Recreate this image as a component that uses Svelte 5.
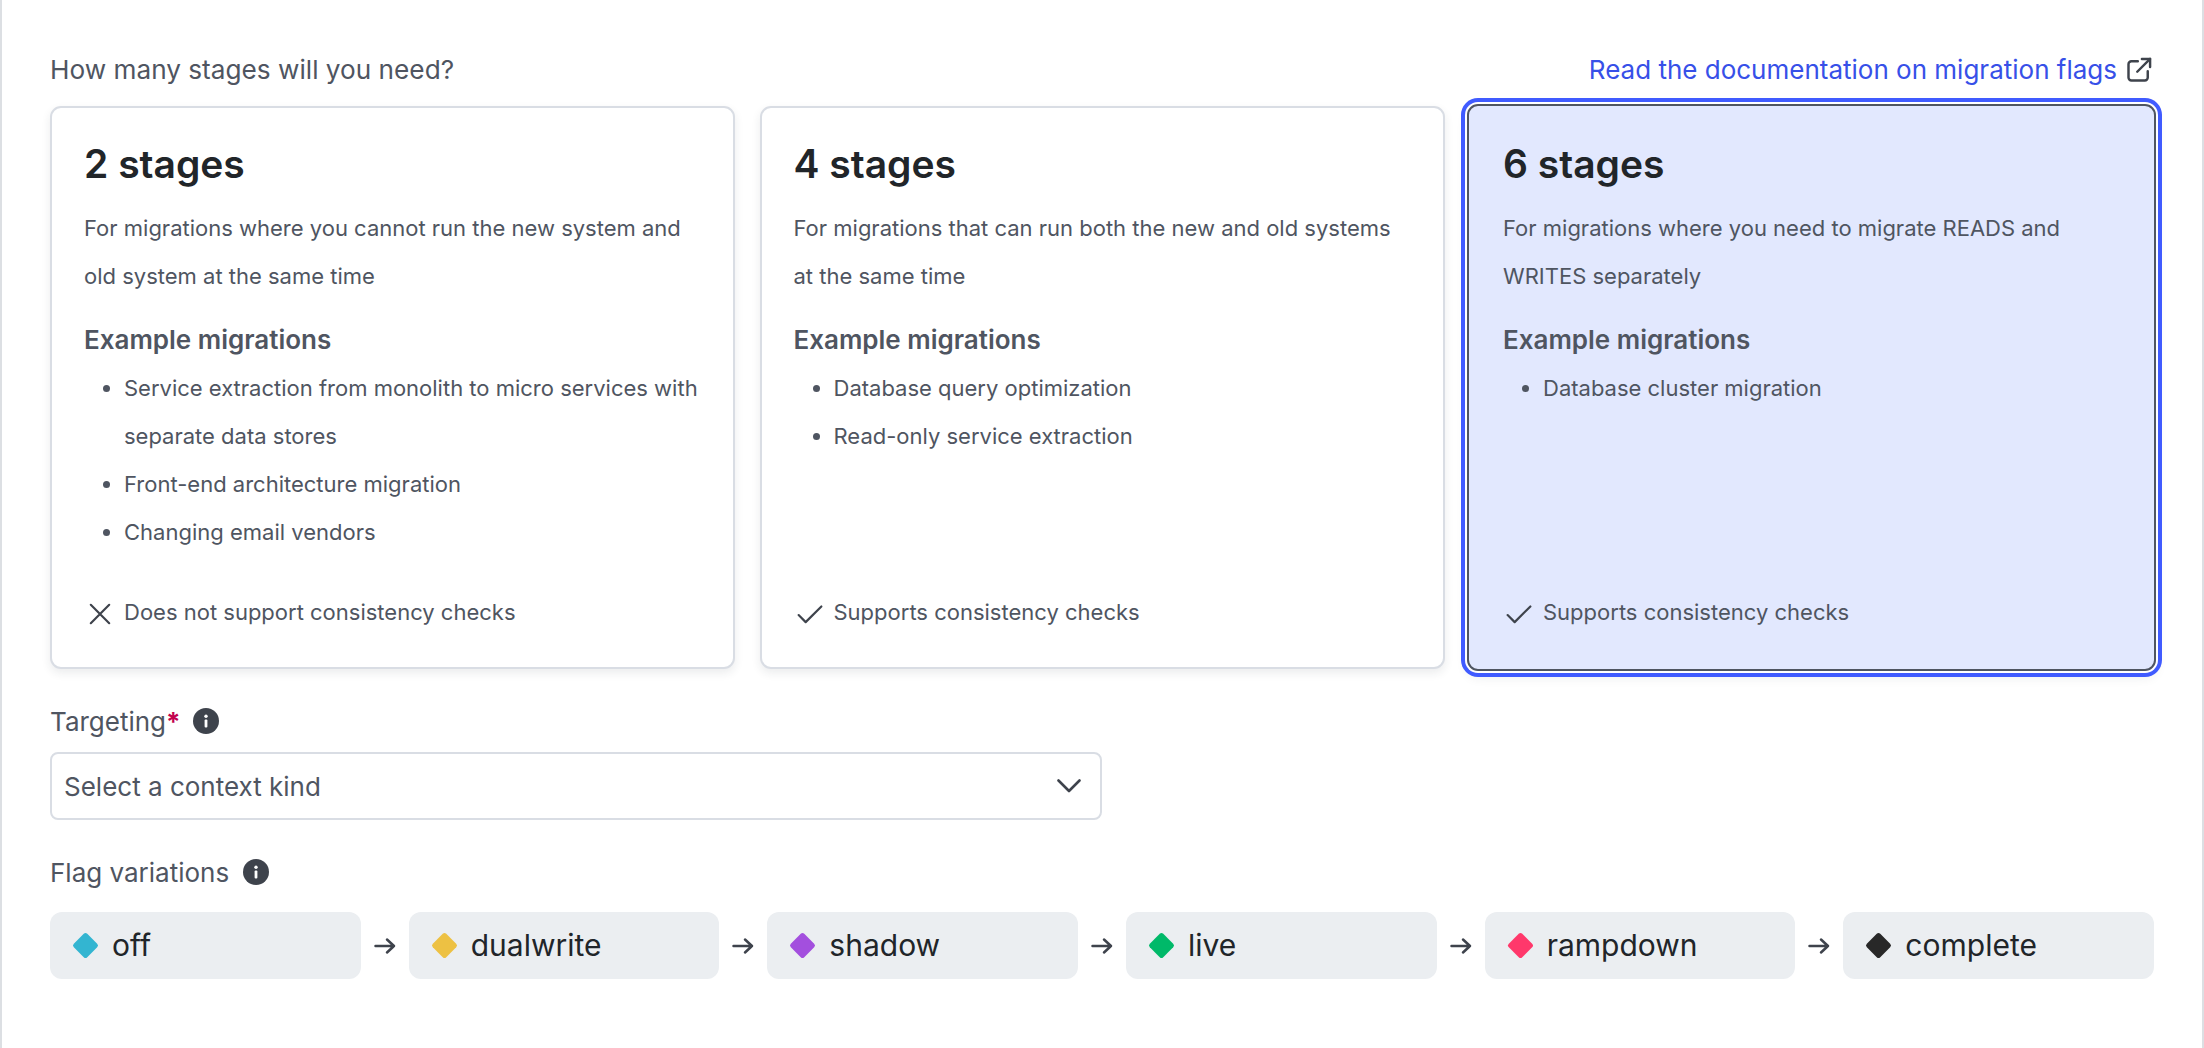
<script>
  const cards = [
    { title: '2 stages', desc: 'For migrations where you cannot run the new system and old system at the same time', items: ['Service extraction from monolith to micro services with separate data stores', 'Front-end architecture migration', 'Changing email vendors'], ok: false, foot: 'Does not support consistency checks' },
    { title: '4 stages', desc: 'For migrations that can run both the new and old systems at the same time', items: ['Database query optimization', 'Read-only service extraction'], ok: true, foot: 'Supports consistency checks' },
    { title: '6 stages', desc: 'For migrations where you need to migrate READS and WRITES separately', items: ['Database cluster migration'], ok: true, foot: 'Supports consistency checks', selected: true }
  ];
  const flags = [
    { name: 'off', color: '#33b5d1' },
    { name: 'dualwrite', color: '#edc143' },
    { name: 'shadow', color: '#a34fde' },
    { name: 'live', color: '#00b969' },
    { name: 'rampdown', color: '#ff386b' },
    { name: 'complete', color: '#282828' }
  ];
</script>

{#snippet info()}
  <svg class="info" viewBox="0 0 26 26" aria-hidden="true">
    <circle cx="13" cy="13" r="13" fill="#3e434c" />
    <circle cx="13" cy="8.2" r="1.7" fill="#fff" />
    <rect x="11.6" y="11.4" width="2.8" height="8" rx="1" fill="#fff" />
  </svg>
{/snippet}

<main class="page">
  <header class="top">
    <span class="label">How many stages will you need?</span>
    <a class="doc" href="#doc">
      Read the documentation on migration flags
      <svg class="ext" viewBox="0 0 24 24" fill="none" stroke="#3e434c" stroke-width="2.1" stroke-linecap="round" stroke-linejoin="round" aria-hidden="true">
        <path d="M11 4.5H5.5a2.5 2.5 0 0 0-2.5 2.5v11.5a2.5 2.5 0 0 0 2.5 2.5H17a2.5 2.5 0 0 0 2.5-2.5V13" />
        <path d="M14.5 2.5h7v7" />
        <path d="M21.5 2.5 10.5 13.5" />
      </svg>
    </a>
  </header>

  <section class="cards">
    {#each cards as c}
      <article class="card" class:selected={c.selected}>
        <h2>{c.title}</h2>
        <p class="desc">{c.desc}</p>
        <h3>Example migrations</h3>
        <ul>
          {#each c.items as it}<li>{it}</li>{/each}
        </ul>
        <div class="foot">
          <svg class="mark" viewBox="0 0 24 24" fill="none" stroke="#3e434c" stroke-width="2" stroke-linecap="round" stroke-linejoin="round" aria-hidden="true">
            {#if c.ok}
              <path d="M1.5 13 8 19.5 22.5 5" />
            {:else}
              <path d="M3.5 3.5 20.5 20.5M20.5 3.5 3.5 20.5" />
            {/if}
          </svg>
          <span class="foot-text">{c.foot}</span>
        </div>
      </article>
    {/each}
  </section>

  <div class="field-label targeting">
    <span>Targeting<b>*</b></span>
    {@render info()}
  </div>
  <div class="select">
    <span>Select a context kind</span>
    <svg class="chev" viewBox="0 0 24 14" fill="none" stroke="#3e434c" stroke-width="2.6" stroke-linecap="round" stroke-linejoin="round" aria-hidden="true">
      <path d="M1.5 1.5 12 12 22.5 1.5" />
    </svg>
  </div>

  <div class="field-label flagsl">
    <span>Flag variations</span>
    {@render info()}
  </div>
  <div class="flags">
    {#each flags as f, i}
      {#if i > 0}
        <svg class="arrow" viewBox="0 0 22 18" fill="none" stroke="#3e434c" stroke-width="2.5" stroke-linecap="round" stroke-linejoin="round" aria-hidden="true">
          <path d="M1.5 9h18.5M13 2.5l7 6.5-7 6.5" />
        </svg>
      {/if}
      <div class="pill">
        <i class="dia" style="background:{f.color}"></i>
        <span class="pill-text">{f.name}</span>
      </div>
    {/each}
  </div>
</main>

<style>
  :global(body) { margin: 0; background: #fff; }
  .page {
    box-sizing: border-box;
    width: 2204px;
    height: 1048px;
    padding: 46px 48px 0;
    border-left: 2px solid #dcdfe3;
    border-right: 2px solid #dcdfe3;
    font-family: Inter, "Liberation Sans", sans-serif;
    color: #4f5561;
    overflow: hidden;
  }
  .top {
    display: flex;
    justify-content: space-between;
    align-items: center;
    height: 47px;
    margin-bottom: 13px;
    font-size: 26px;
  }
  .label { font-size: 26.2px; }
  .doc {
    display: flex;
    align-items: center;
    gap: 8px;
    color: #3750e8;
    text-decoration: none;
    margin-right: 1px;
  }
  .ext { width: 28px; height: 28px; }
  .cards {
    display: grid;
    grid-template-columns: repeat(3, 1fr);
    gap: 24.5px;
    height: 563px;
  }
  .card {
    box-sizing: border-box;
    display: flex;
    flex-direction: column;
    border: 2px solid #d9dde4;
    border-radius: 11px;
    padding: 32px 32px 0;
    background: #fff;
    box-shadow: 0 4px 10px rgba(30, 40, 60, 0.09);
    min-width: 0;
  }
  .card.selected {
    margin: -2px;
    padding: 34px 34px 0;
    background: #e2e8fe;
    border-color: #4f5561;
    box-shadow: 0 0 0 2px #fff, 0 0 0 6px #405bff, 0 6px 12px rgba(30, 40, 60, 0.09);
  }
  .card.selected .foot { margin-bottom: 32px; }
  h2 {
    margin: 0;
    font-size: 39px;
    font-weight: 600;
    line-height: 48px;
    color: #212529;
  }
  .desc {
    margin: 16px 0 0;
    font-size: 22px;
    line-height: 48px;
  }
  h3 {
    margin: 16px 0 0;
    font-size: 26px;
    font-weight: 600;
    line-height: 48px;
  }
  ul {
    margin: 0;
    padding: 0 0 0 40px;
    font-size: 22px;
    line-height: 48px;
    flex: 1;
  }
  .foot {
    display: flex;
    align-items: center;
    gap: 11px;
    font-size: 22px;
    height: 48px;
    margin-bottom: 30px;
    padding-left: 3px;
  }
  .foot-text { margin-bottom: 2px; }
  .mark { width: 26px; height: 26px; position: relative; top: 1px; }
  .field-label {
    display: flex;
    align-items: center;
    gap: 12px;
    font-size: 26px;
    height: 36px;
  }
  .field-label b { color: #c2024f; font-weight: 700; }
  .info { width: 26px; height: 26px; }
  .targeting { margin-top: 34px; }
  .select {
    box-sizing: border-box;
    width: 1052px;
    height: 68px;
    margin-top: 13px;
    padding: 0 19px 0 12px;
    display: flex;
    align-items: center;
    justify-content: space-between;
    border: 2px solid #d9dde4;
    border-radius: 8px;
    font-size: 26px;
  }
  .chev { width: 24px; height: 14px; }
  .flagsl { margin-top: 34px; gap: 14px; }
  .flags {
    display: flex;
    align-items: center;
    margin-top: 22px;
  }
  .arrow { width: 22px; height: 18px; margin: 0 13px; flex: none; }
  .pill {
    box-sizing: border-box;
    flex: 1;
    height: 67px;
    display: flex;
    align-items: center;
    gap: 14px;
    padding-left: 23px;
    background: #ebeef1;
    border-radius: 12px;
    font-size: 30px;
    color: #212529;
  }
  .pill-text { margin-bottom: 2px; }
  .dia {
    width: 19px;
    height: 19px;
    margin: 0 3px;
    border-radius: 2.5px;
    transform: rotate(45deg);
    flex: none;
  }
</style>
